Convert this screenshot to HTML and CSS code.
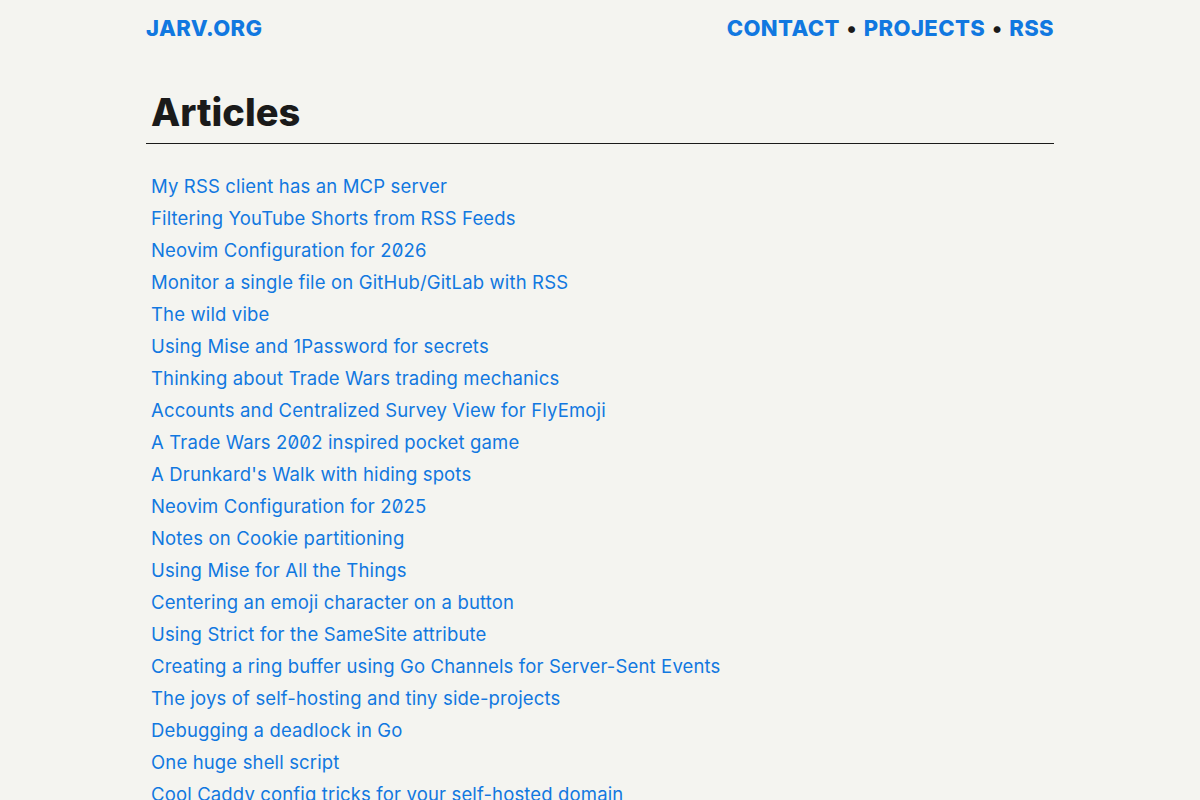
FILE: index.html
```html
<!DOCTYPE html>
<html lang="en">
<head>
    <meta charset="UTF-8">
    <meta name="viewport" content="width=device-width, initial-scale=1.0">
    <title>Articles - jarv.org</title>
    <link rel="stylesheet" href="styles.css">
</head>
<body>
    <div class="container">
        <header class="site-header">
            <a class="site-name" href="#">JARV.ORG</a>
            <nav class="site-nav">
                <a href="#">CONTACT</a>
                <span class="dot">&bull;</span>
                <a href="#">PROJECTS</a>
                <span class="dot">&bull;</span>
                <a href="#">RSS</a>
            </nav>
        </header>

        <main>
            <h1>Articles</h1>
            <ul class="posts">
                <li><a href="#">My RSS client has an MCP server</a></li>
                <li><a href="#">Filtering YouTube Shorts from RSS Feeds</a></li>
                <li><a href="#">Neovim Configuration for 2026</a></li>
                <li><a href="#">Monitor a single file on GitHub/GitLab with RSS</a></li>
                <li><a href="#">The wild vibe</a></li>
                <li><a href="#">Using Mise and 1Password for secrets</a></li>
                <li><a href="#">Thinking about Trade Wars trading mechanics</a></li>
                <li><a href="#">Accounts and Centralized Survey View for FlyEmoji</a></li>
                <li><a href="#">A Trade Wars 2002 inspired pocket game</a></li>
                <li><a href="#">A Drunkard's Walk with hiding spots</a></li>
                <li><a href="#">Neovim Configuration for 2025</a></li>
                <li><a href="#">Notes on Cookie partitioning</a></li>
                <li><a href="#">Using Mise for All the Things</a></li>
                <li><a href="#">Centering an emoji character on a button</a></li>
                <li><a href="#">Using Strict for the SameSite attribute</a></li>
                <li><a href="#">Creating a ring buffer using Go Channels for Server-Sent Events</a></li>
                <li><a href="#">The joys of self-hosting and tiny side-projects</a></li>
                <li><a href="#">Debugging a deadlock in Go</a></li>
                <li><a href="#">One huge shell script</a></li>
                <li><a href="#">Cool Caddy config tricks for your self-hosted domain</a></li>
            </ul>
        </main>
    </div>
</body>
</html>
```

FILE: styles.css
```css
body {
    font-family: Inter, "Noto Sans", sans-serif;
    font-variant-numeric: slashed-zero;
    background-color: #f4f4f0;
    color: #1a1a1a;
    margin: 0;
    padding: 0;
}

a {
    color: #1178e0;
    text-decoration: none;
}

.container {
    max-width: 908px;
    margin: 0 auto;
}

.site-header {
    display: flex;
    justify-content: space-between;
    align-items: center;
    height: 56px;
    font-size: 22px;
    font-weight: 800;
    letter-spacing: 0.4px;
}

.site-nav {
    display: flex;
    align-items: center;
    gap: 7px;
}

.dot {
    color: #1a1a1a;
}

h1 {
    font-size: 38px;
    font-weight: 800;
    margin: 33px 0 0;
    padding: 0 5px 8px;
    border-bottom: 1px solid #1a1a1a;
}

.posts {
    list-style: none;
    margin: 0;
    padding: 26px 5px 0;
}

.posts li {
    font-size: 18.5px;
    line-height: 32px;
    letter-spacing: 0.15px;
}
```
